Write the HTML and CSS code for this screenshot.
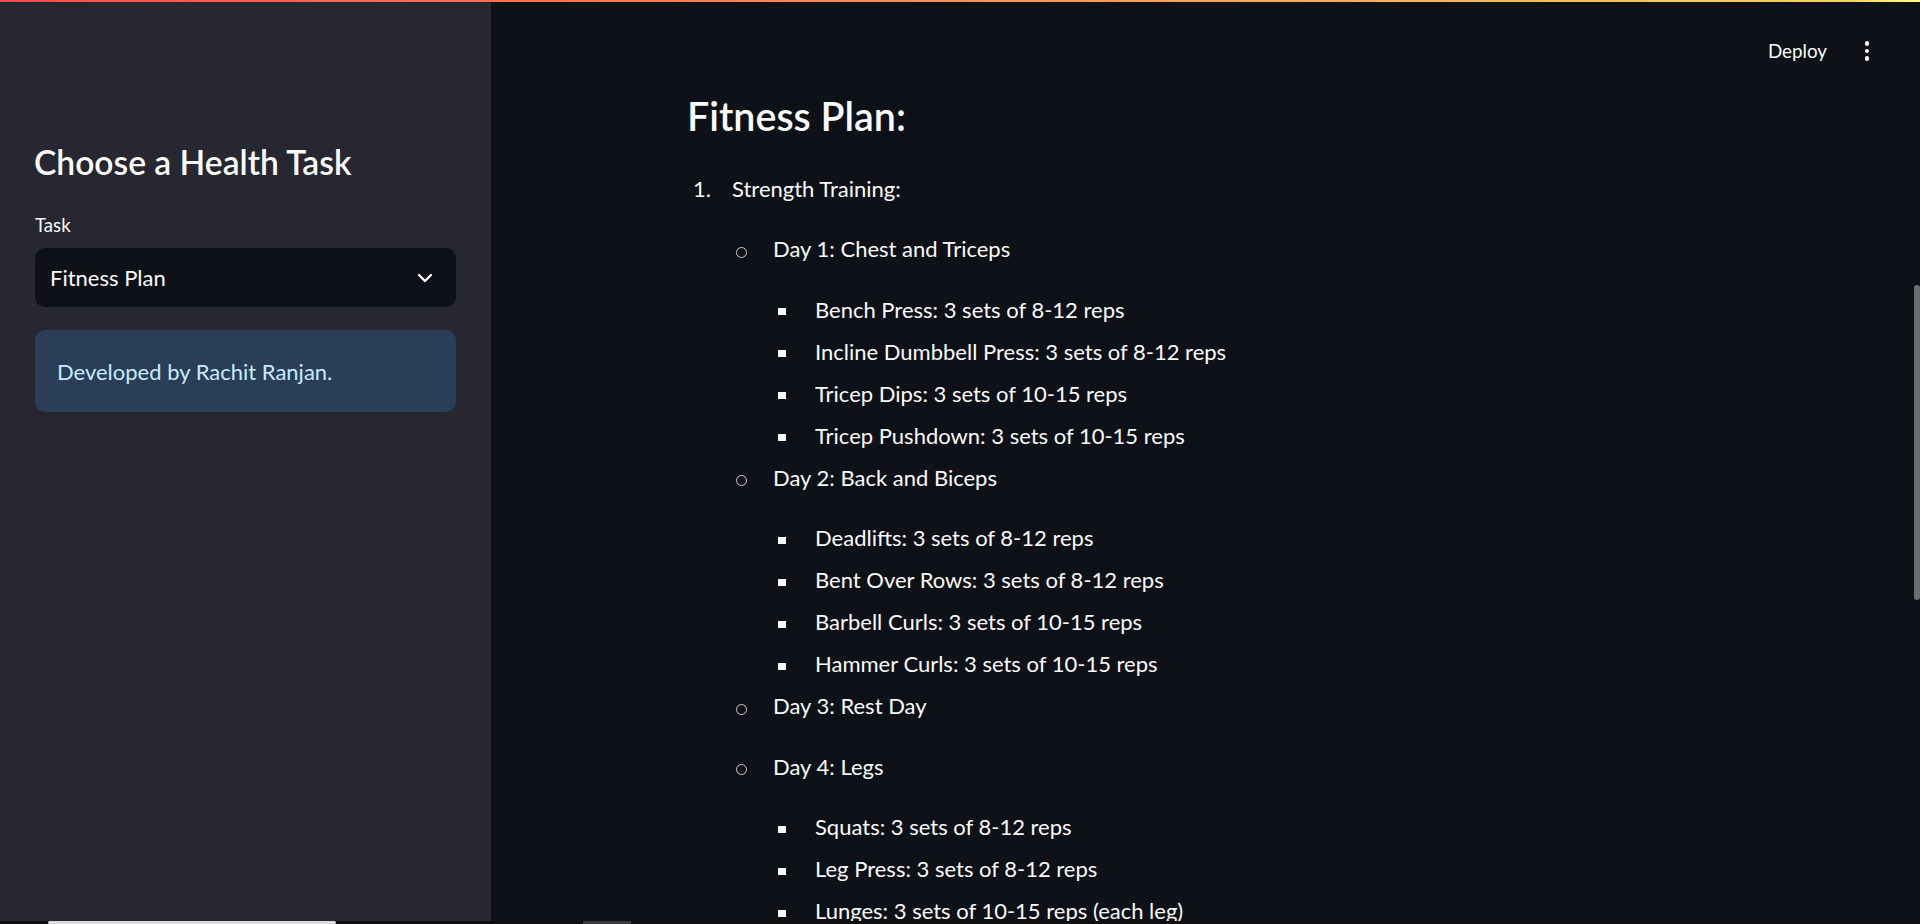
FILE: index.html
```html
<!DOCTYPE html>
<html lang="en">
<head>
<meta charset="utf-8">
<title>Health Assistant</title>
<link rel="stylesheet" href="styles.css">
</head>
<body>
<div class="app">
  <div class="decoration"></div>
  <div class="shell">
    <aside class="sidebar">
      <h2 class="sb-title">Choose a Health Task</h2>
      <label class="field-label">Task</label>
      <div class="select">
        <span class="select-value">Fitness Plan</span>
        <svg class="chevron" width="16" height="10" viewBox="0 0 16 10"><path d="M2 2 L8 8 L14 2" fill="none" stroke="#fafafa" stroke-width="2.4" stroke-linecap="round" stroke-linejoin="round"/></svg>
      </div>
      <div class="info">Developed by Rachit Ranjan.</div>
    </aside>
    <main class="main">
      <header class="topbar">
        <button class="deploy">Deploy</button>
        <button class="kebab" aria-label="Main menu"><i></i><i></i><i></i></button>
      </header>
      <section class="content">
        <h3 class="plan-title">Fitness Plan:</h3>
        <ol class="lvl1">
          <li><p>Strength Training:</p>
            <ul class="lvl2">
              <li><p>Day 1: Chest and Triceps</p>
                <ul class="lvl3">
                  <li><span>Bench Press: 3 sets of 8-12 reps</span></li>
                  <li><span>Incline Dumbbell Press: 3 sets of 8-12 reps</span></li>
                  <li><span>Tricep Dips: 3 sets of 10-15 reps</span></li>
                  <li><span>Tricep Pushdown: 3 sets of 10-15 reps</span></li>
                </ul>
              </li>
              <li><p>Day 2: Back and Biceps</p>
                <ul class="lvl3">
                  <li><span>Deadlifts: 3 sets of 8-12 reps</span></li>
                  <li><span>Bent Over Rows: 3 sets of 8-12 reps</span></li>
                  <li><span>Barbell Curls: 3 sets of 10-15 reps</span></li>
                  <li><span>Hammer Curls: 3 sets of 10-15 reps</span></li>
                </ul>
              </li>
              <li><p>Day 3: Rest Day</p></li>
              <li><p>Day 4: Legs</p>
                <ul class="lvl3">
                  <li><span>Squats: 3 sets of 8-12 reps</span></li>
                  <li><span>Leg Press: 3 sets of 8-12 reps</span></li>
                  <li><span>Lunges: 3 sets of 10-15 reps (each leg)</span></li>
                </ul>
              </li>
            </ul>
          </li>
        </ol>
      </section>
      <div class="vscroll"></div>
    </main>
  </div>
  <div class="hscroll"><span class="thumb-a"></span><span class="thumb-b"></span></div>
</div>
</body>
</html>
```
FILE: styles.css
```css
* { box-sizing: border-box; }
html, body { margin: 0; height: 100%; overflow: hidden; }
body {
  font-family: Lato, "Open Sans", sans-serif;
  color: #fafafa;
  background: #0e1117;
}
.app { display: flex; flex-direction: column; height: 924px; }
.decoration {
  height: 2px;
  flex: none;
  background: linear-gradient(90deg, #ff4b4b, #ffd35a 96%, #fffd80);
}
.shell { flex: 1; display: flex; min-height: 0; }

/* Sidebar */
.sidebar {
  width: 491px;
  flex: none;
  background: #262730;
  padding: 140px 35px 0 35px;
  display: flex;
  flex-direction: column;
}
.sb-title {
  margin: 0 0 31px -1px;
  font-size: 33.6px;
  font-weight: 600;
  line-height: 40px;
  color: #fafafa;
}
.field-label {
  font-size: 18.6px;
  line-height: 24px;
  color: #fafafa;
  margin-bottom: 11px;
}
.select {
  height: 59px;
  background: #0e1117;
  border-radius: 10px;
  display: flex;
  align-items: center;
  justify-content: space-between;
  padding: 0 23px 0 15px;
  font-size: 22px;
}
.chevron { display: block; }
.info {
  margin-top: 23px;
  height: 82px;
  border-radius: 10px;
  background: rgba(61, 157, 243, 0.2);
  color: #c7ebff;
  display: flex;
  align-items: center;
  padding: 0 22px;
  font-size: 22px;
}

/* Main */
.main {
  flex: 1;
  position: relative;
  overflow: hidden;
  min-width: 0;
}
.topbar {
  height: 90px;
  display: flex;
  justify-content: flex-end;
  align-items: flex-start;
  padding: 37px 33px 0 0;
  gap: 8px;
}
.deploy {
  font-family: inherit;
  font-size: 18.8px;
  line-height: 24px;
  color: #fafafa;
  background: transparent;
  border: 0;
  padding: 0 12px;
  height: 24px;
}
.kebab {
  width: 40px;
  height: 24px;
  background: transparent;
  border: 0;
  padding: 0;
  display: flex;
  flex-direction: column;
  align-items: center;
  justify-content: center;
  gap: 2.8px;
}
.kebab i {
  display: block;
  width: 4.5px;
  height: 4.5px;
  border-radius: 50%;
  background: #fafafa;
}
.content {
  max-width: 1031px;
  margin: 0 auto;
  font-size: 22px;
}
.plan-title {
  margin: 0 0 28.5px -3px;
  font-size: 39.4px;
  font-weight: 600;
  line-height: 47px;
}
.content ol, .content ul {
  list-style: none;
  margin: 0;
  padding: 0;
}
.content li {
  display: grid;
  align-items: start;
}
.content li > * { grid-column: 2; }
.content li::before { grid-column: 1; grid-row: 1; }
.content p { margin: 0 0 18.5px 0; line-height: 42px; }
.content li > span { line-height: 42px; }

.lvl1 { counter-reset: item; }
.lvl1 > li { grid-template-columns: 42px 1fr; counter-increment: item; }
.lvl1 > li::before {
  content: counter(item) ".";
  line-height: 42px;
  margin-left: 3px;
}
.lvl2 > li { grid-template-columns: 41px 1fr; }
.lvl2 > li::before {
  content: "";
  width: 9px;
  height: 9px;
  margin: 18.5px 0 0 4px;
  border: 1.4px solid #cfcfcf;
  border-radius: 50%;
}
.lvl3 > li { grid-template-columns: 42px 1fr; }
.lvl3 > li::before {
  content: "";
  width: 8px;
  height: 7px;
  margin: 19.5px 0 0 5px;
  background: #fafafa;
}

.vscroll {
  position: absolute;
  right: 0;
  top: 283px;
  width: 6px;
  height: 315px;
  border-radius: 3px;
  background: #6c6d70;
}

.hscroll {
  height: 3px;
  flex: none;
  background: #0f0f10;
  display: flex;
  align-items: stretch;
  padding-left: 48px;
}
.thumb-a { width: 288px; background: #dcdcdc; border-radius: 2px; }
.thumb-b { width: 48px; margin-left: 247px; background: #3b3b3d; }
```
